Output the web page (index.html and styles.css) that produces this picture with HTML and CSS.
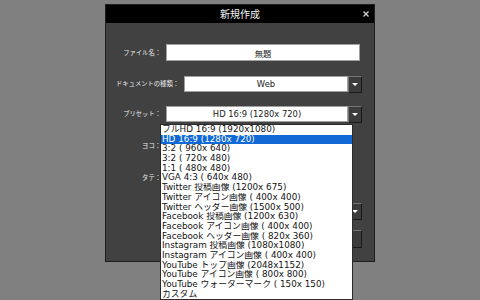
FILE: index.html
```html
<!DOCTYPE html>
<html lang="ja">
<head>
  <meta charset="UTF-8">
  <meta name="viewport" content="width=device-width, initial-scale=1.0">
  <link rel="stylesheet" href="styles.css">
  <title>新規作成</title>
</head>
<body>
<div class="dialog">
  <div class="titlebar">
    新規作成
    <svg class="close" viewBox="0 0 6 6" width="6" height="6">
      <path d="M0.5 0.5 L5.5 5.5 M5.5 0.5 L0.5 5.5" stroke="#cfcfcf" stroke-width="1.4" />
    </svg>
  </div>
  <div class="form">
    <div class="row row-name">
      <span class="label">ファイル名：</span>
      <div class="field field-name">無題</div>
    </div>
    <div class="row row-type">
      <span class="label label-wide">ドキュメントの種類：</span>
      <div class="field">Web</div>
      <span class="drop"></span>
    </div>
    <div class="row row-preset">
      <span class="label">プリセット：</span>
      <div class="field">HD 16:9 (1280x 720)</div>
      <span class="drop"></span>
      <ul class="list">
        <li>フルHD 16:9 (1920x1080)</li>
        <li class="selected">HD 16:9 (1280x 720)</li>
        <li>3:2 ( 960x 640)</li>
        <li>3:2 ( 720x 480)</li>
        <li>1:1 ( 480x 480)</li>
        <li>VGA 4:3 ( 640x 480)</li>
        <li>Twitter 投稿画像 (1200x 675)</li>
        <li>Twitter アイコン画像 ( 400x 400)</li>
        <li>Twitter ヘッダー画像 (1500x 500)</li>
        <li>Facebook 投稿画像 (1200x 630)</li>
        <li>Facebook アイコン画像 ( 400x 400)</li>
        <li>Facebook ヘッダー画像 ( 820x 360)</li>
        <li>Instagram 投稿画像 (1080x1080)</li>
        <li>Instagram アイコン画像 ( 400x 400)</li>
        <li>YouTube トップ画像 (2048x1152)</li>
        <li>YouTube アイコン画像 ( 800x 800)</li>
        <li>YouTube ウォーターマーク ( 150x 150)</li>
        <li>カスタム</li>
      </ul>
    </div>
    <div class="row row-width">
      <span class="label">ヨコ：</span>
      <div class="field field-short"></div>
    </div>
    <div class="row row-height">
      <span class="label">タテ：</span>
      <div class="field field-short"></div>
    </div>
    <div class="row row-color">
      <span class="label"></span>
      <div class="field"></div>
      <span class="drop"></span>
    </div>
    <div class="row row-buttons">
      <span class="label"></span>
      <span class="spacer"></span>
      <span class="button"></span>
      <span class="button"></span>
    </div>
  </div>
</div>
</body>
</html>
```

FILE: styles.css
```css
* {
  box-sizing: border-box;
}

body {
  margin: 0;
  height: 300px;
  overflow: hidden;
  background: #808080;
  font-family: "DejaVu Sans", "Noto Sans CJK JP", sans-serif;
}

.dialog {
  margin: 4px 0 0 105px;
  width: 270px;
  height: 258px;
  background: #414141;
  border: 1px solid #1e1e1e;
}

.titlebar {
  position: relative;
  height: 18px;
  background: #000;
  color: #f2f2f2;
  font: 10px/18px "Noto Sans CJK JP", sans-serif;
  text-align: center;
}

.close {
  position: absolute;
  right: 5px;
  top: 6px;
}

.form {
  display: flex;
  flex-direction: column;
  padding: 21px 12px 0 0;
}

.row {
  display: flex;
  align-items: center;
  gap: 5px;
  height: 16px;
}

.row-name { height: 17px; }
.row-type { margin-top: 15px; }
.row-preset { margin-top: 14px; position: relative; }
.row-width { margin-top: 16px; }
.row-height { margin-top: 16px; }
.row-color { margin-top: 17px; }
.row-buttons { margin-top: 11px; height: 18px; }

.label {
  flex: none;
  width: 55px;
  text-align: right;
  color: #ececec;
  font: 6.3px/16px "Noto Sans CJK JP", sans-serif;
  white-space: nowrap;
}

.label-wide {
  width: 73px;
}

.field {
  flex: 1;
  height: 16px;
  display: flex;
  align-items: center;
  justify-content: center;
  background: #fff;
  border: 1px solid #a0a0a0;
  color: #222;
  font: 8.4px "DejaVu Sans", "Noto Sans CJK JP", sans-serif;
}

.field-name {
  height: 17px;
  margin-right: 2px;
}

.field-short {
  flex: none;
  width: 110px;
}

/* the little arrow button next to a select */
.drop {
  flex: none;
  width: 14px;
  height: 17px;
  margin-left: -5px;
  display: flex;
  align-items: center;
  justify-content: center;
  background: #3b3b3b;
  border: 1px solid;
  border-color: #757575 #1a1a1a #1a1a1a #757575;
}

.drop::after {
  content: "";
  border-left: 3px solid transparent;
  border-right: 3px solid transparent;
  border-top: 3px solid #fff;
}

.spacer {
  flex: 1;
}

.button {
  flex: none;
  width: 80px;
  height: 18px;
  background: #3b3b3b;
  border: 1px solid;
  border-color: #757575 #1a1a1a #1a1a1a #757575;
}

/* open dropdown of the preset select */
.list {
  position: absolute;
  top: 18px;
  left: 54px;
  z-index: 1;
  width: 193px;
  margin: 0;
  padding: 0;
  list-style: none;
  background: #fff;
  border: 1px solid #2b2b2b;
  color: #141414;
  font: 8.8px/9.7px "DejaVu Sans", "Noto Sans CJK JP", sans-serif;
}

.list li {
  height: 9.7px;
  padding-left: 1px;
  white-space: pre;
  overflow: hidden;
}

.list .selected {
  background: #1169d6;
  color: #fff;
}
```
